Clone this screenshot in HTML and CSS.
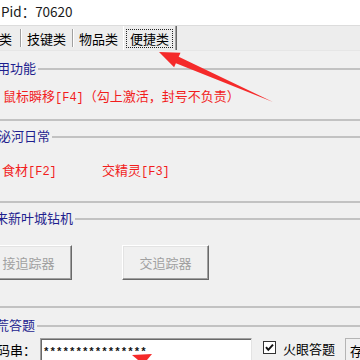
FILE: index.html
```html
<!DOCTYPE html>
<html lang="zh-CN">
<head>
<meta charset="utf-8">
<title>便捷类</title>
<link rel="stylesheet" href="styles.css">
</head>
<body>
<div class="window">
  <header class="pid">Pid：70620</header>
  <nav class="tabs">
    <span class="tab tab-cut">类</span>
    <span class="sep"></span>
    <span class="tab tab-2">技键类</span>
    <span class="sep sep-2"></span>
    <span class="tab tab-3">物品类</span>
    <span class="tab tab-active"><span class="focus">便捷类</span></span>
  </nav>

  <section class="group g1">
    <div class="gtitle"><span class="gname">常用功能</span><span class="gline"></span></div>
    <div class="gbody">
      <span class="red">鼠标瞬移<span class="key">[F4]</span>（勾上激活，封号不负责）</span>
    </div>
  </section>

  <section class="group g2">
    <div class="gtitle"><span class="gname">泌河日常</span><span class="gline"></span></div>
    <div class="gbody">
      <span class="red item">食材<span class="key">[F2]</span></span>
      <span class="red item">交精灵<span class="key">[F3]</span></span>
    </div>
  </section>

  <section class="group g3">
    <div class="gtitle"><span class="gname">来新叶城钻机</span><span class="gline"></span></div>
    <div class="gbody">
      <button class="btn" disabled>接追踪器</button>
      <button class="btn btn-2" disabled>交追踪器</button>
    </div>
  </section>

  <section class="group g4">
    <div class="gtitle"><span class="gname">荒答题</span><span class="gline"></span></div>
    <div class="gbody">
      <span class="label">码串：</span>
      <span class="input"><span class="pw">****************</span></span>
      <span class="check"><svg viewBox="0 0 13 13" width="13" height="13"><path d="M3 6.2 L5.3 8.8 L10 3.6" fill="none" stroke="#111" stroke-width="2"/></svg></span>
      <span class="check-label">火眼答题</span>
      <span class="btn-save">存储</span>
    </div>
  </section>
</div>
<svg class="arrows" width="360" height="360" viewBox="0 0 360 360">
  <polygon points="159,52 180.5,52.7 178.7,56.8 273,102 175.9,63.2 174.1,67.3" fill="#f52a2a"/>
  <polygon points="132,355 152,354 147,360 138,360" fill="#f52a2a"/>
</svg>
</body>
</html>
```

FILE: styles.css
```css
html, body {
  margin: 0;
  padding: 0;
  overflow: hidden;
  width: 360px;
  height: 360px;
  background: #f0f0f0;
}
body {
  position: relative;
  font-family: "Noto Sans CJK SC", "Noto Sans", sans-serif;
  font-size: 13px;
  color: #000;
}
.window {
  width: 360px;
  height: 360px;
  overflow: hidden;
}
.pid {
  height: 25px;
  line-height: 23px;
  background: #fff;
  font-size: 13.5px;
  color: #1a1a1a;
  padding-left: 1px;
}
.tabs {
  display: flex;
  align-items: center;
  height: 24px;
  background: #ededed;
  border-top: 1px solid #dcdcdc;
  border-bottom: 1px solid #e6e6e6;
  margin-left: -1px;
  font-size: 13px;
  line-height: 17px;
}
.tabs > * {
  flex-shrink: 0;
}
.tab {
  white-space: nowrap;
}
.tab-cut {
  width: 13px;
}
.sep {
  width: 1px;
  height: 18px;
  background: #a0a0a0;
  border-right: 1px solid #fff;
  margin-left: 8px;
}
.sep-2 {
  margin-left: 6px;
}
.tab-2, .tab-3 {
  margin-left: 5px;
}
.tab-active {
  margin-left: 5px;
  height: 24px;
  display: flex;
  align-items: center;
  border-left: 1px solid #fff;
  border-right: 1px solid #696969;
  box-shadow: inset -1px 0 0 #a0a0a0;
  padding: 0 3px 0 2px;
}
.focus {
  border: 1px dotted #222;
  padding: 0 3px;
  line-height: 17px;
}

.group {
  margin: 0 -20px;
  border-bottom: 2px solid #c2c2c2;
}
.gtitle {
  display: flex;
  align-items: center;
  height: 14px;
}
.gname {
  flex-shrink: 0;
  color: #1f1f8f;
  line-height: 14px;
  padding-right: 2px;
  white-space: nowrap;
}
.gline {
  flex: 1 1 auto;
  height: 0;
  border-top: 2px solid #c2c2c2;
  margin-top: 1px;
}
.gbody {
  display: flex;
  align-items: flex-start;
}
.gbody > * {
  flex-shrink: 0;
}
.red {
  color: #f21d1d;
  line-height: 14px;
  white-space: nowrap;
}
.key {
  font-family: "Liberation Mono", monospace;
  font-size: 12px;
}

.g1 { margin-top: 10px; }
.g1 .gtitle { padding-left: 4px; }
.g1 .gbody { padding: 14px 0 14px 23px; }

.g2 { margin-top: 8px; }
.g2 .gtitle { padding-left: 18px; }
.g2 .gbody { padding: 20px 0 22px 22px; }
.item { width: 100px; }

.g3 { margin-top: 8px; }
.g3 .gtitle { padding-left: 15px; }
.g3 .gbody { padding: 20px 0 26px 5px; }
.btn {
  width: 87px;
  height: 35px;
  box-sizing: border-box;
  margin: 0;
  padding: 0;
  background: #f0f0f0;
  color: #a0a0a0;
  font-family: inherit;
  font-size: 13px;
  border: 1px solid;
  border-color: #fff #696969 #696969 #fff;
  box-shadow: inset -1px -1px 0 #a0a0a0, inset 1px 1px 0 #e3e3e3;
}
.btn-2 { margin-left: 50px; }

.g4 { margin-top: 10px; border-bottom: none; }
.g4 .gtitle { padding-left: 16px; }
.g4 .gbody { padding: 6px 0 0 17px; }
.label {
  width: 39px;
  line-height: 24px;
  white-space: nowrap;
}
.input {
  margin-left: 4px;
  width: 212px;
  height: 26px;
  box-sizing: border-box;
  background: #fff;
  border: 1px solid;
  border-color: #a0a0a0 #e3e3e3 #e3e3e3 #a0a0a0;
  box-shadow: inset 1px 1px 0 #696969;
  padding: 1px 0 0 2px;
}
.pw {
  font-family: "Liberation Mono", monospace;
  font-size: 10.8px;
  font-weight: bold;
  line-height: 18px;
  color: #111;
}
.check {
  margin: 3px 0 0 11px;
  width: 13px;
  height: 13px;
  box-sizing: border-box;
  border: 1px solid #333;
  background: #fff;
  display: flex;
}
.check svg {
  margin: -1px;
}
.check-label {
  margin-left: 7px;
  line-height: 22px;
  white-space: nowrap;
}
.btn-save {
  margin-left: 10px;
  width: 60px;
  height: 30px;
  box-sizing: border-box;
  border-left: 1px solid #b4b4b4;
  border-top: 1px solid #b4b4b4;
  padding-left: 4px;
  line-height: 24px;
  white-space: nowrap;
}
.arrows {
  position: absolute;
  left: 0;
  top: 0;
  pointer-events: none;
}
```
